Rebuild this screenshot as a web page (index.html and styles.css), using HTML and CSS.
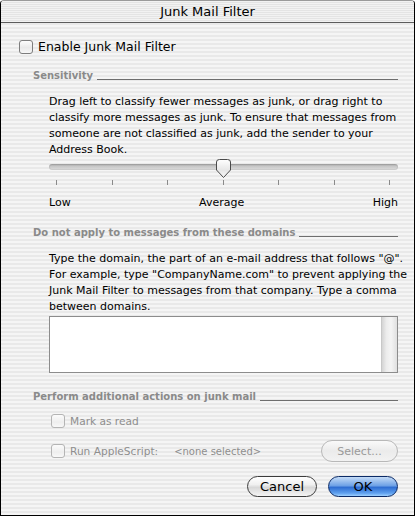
FILE: index.html
```html
<!DOCTYPE html>
<html>
<head>
<meta charset="utf-8">
<link rel="stylesheet" href="styles.css">
</head>
<body>
<div class="window">
  <div class="titlebar">Junk Mail Filter</div>
  <div class="content">
    <div class="check main-check"><span class="box"></span><span>Enable Junk Mail Filter</span></div>

    <div class="group-head head-sens"><span class="head-text">Sensitivity</span><span class="rule"></span></div>
    <p class="desc">Drag left to classify fewer messages as junk, or drag right to<br>classify more messages as junk. To ensure that messages from<br>someone are not classified as junk, add the sender to your<br>Address Book.</p>

    <div class="slider">
      <div class="track"></div>
      <svg class="thumb" width="17" height="21" viewBox="0 0 17 21">
        <defs>
          <linearGradient id="tg" x1="0" y1="0" x2="0" y2="1">
            <stop offset="0" stop-color="#ffffff"/>
            <stop offset="0.6" stop-color="#e6e6e6"/>
            <stop offset="1" stop-color="#f8f8f8"/>
          </linearGradient>
        </defs>
        <path d="M1.5,4 Q1.5,1.5 4.5,1.5 H12.5 Q15.5,1.5 15.5,4 V12 L8.5,19.5 L1.5,12 Z" fill="url(#tg)" stroke="#4a4a4a" stroke-width="1"/>
      </svg>
      <div class="ticks"><span></span><span></span><span></span><span></span><span></span><span></span><span></span></div>
    </div>
    <div class="scale-labels"><span>Low</span><span>Average</span><span>High</span></div>

    <div class="group-head head-domains"><span class="head-text">Do not apply to messages from these domains</span><span class="rule"></span></div>
    <p class="desc desc2">Type the domain, the part of an e-mail address that follows "@".<br>For example, type "CompanyName.com" to prevent applying the<br>Junk Mail Filter to messages from that company. Type a comma<br>between domains.</p>
    <div class="field"><div class="field-body"></div><div class="scroll"></div></div>

    <div class="group-head head-actions"><span class="head-text">Perform additional actions on junk mail</span><span class="rule"></span></div>
    <div class="check sub-check disabled mark-row"><span class="box"></span><span>Mark as read</span></div>
    <div class="script-row">
      <div class="check sub-check disabled"><span class="box"></span><span>Run AppleScript:</span></div>
      <span class="none-selected">&lt;none selected&gt;</span>
      <button class="btn btn-select">Select...</button>
    </div>
    <div class="buttons">
      <button class="btn btn-cancel">Cancel</button>
      <button class="btn btn-ok">OK</button>
    </div>
  </div>
</div>
</body>
</html>
```

FILE: styles.css
```css
html, body {
  margin: 0;
  padding: 0;
  background: #ffffff;
}
body {
  width: 415px;
  height: 516px;
  font-family: "DejaVu Sans", "Liberation Sans", sans-serif;
  color: #000;
}
.window {
  box-sizing: border-box;
  width: 415px;
  height: 516px;
  border-left: 1px solid #000;
  border-right: 1px solid #000;
  border-bottom: 1px solid #000;
  border-top: 1px solid #9a9a9a;
  border-radius: 4px 4px 0 0;
  overflow: hidden;
  background: repeating-linear-gradient(to bottom, #f5f5f5 0px, #f5f5f5 2px, #e9e9e9 2px, #e9e9e9 4px);
}
.titlebar {
  height: 21px;
  border-bottom: 1px solid #5c5c5c;
  text-align: center;
  font-size: 13px;
  line-height: 21px;
  background: repeating-linear-gradient(to bottom, #f2f2f2 0px, #f2f2f2 1px, #e4e4e4 1px, #e4e4e4 2px);
}
.content {
  padding: 0 16px 0 18px;
}
.check {
  display: flex;
  align-items: center;
  font-size: 12.5px;
  line-height: 16px;
}
.box {
  box-sizing: border-box;
  width: 14px;
  height: 14px;
  border: 1px solid #7d7d7d;
  border-radius: 3px;
  background: linear-gradient(to bottom, #fdfdfd 0%, #e9e9e9 55%, #f7f7f7 100%);
  margin-right: 5px;
  flex: none;
}
.main-check {
  margin-top: 16px;
}
.group-head {
  display: flex;
  align-items: center;
  margin-left: 14px;
  height: 14px;
}
.head-text {
  font-size: 10px;
  font-weight: bold;
  color: #8a8a8a;
  white-space: nowrap;
}
.rule {
  flex: 1;
  height: 1px;
  background: #6e6e6e;
  margin-left: 4px;
  margin-top: 8px;
}
.head-sens { margin-top: 13px; }
.desc {
  margin: 12px 0 0 30px;
  font-size: 11px;
  line-height: 16px;
  white-space: nowrap;
}
.slider {
  position: relative;
  margin-left: 30px;
  height: 28px;
}
.track {
  position: absolute;
  left: 0;
  right: 0;
  top: 6px;
  height: 6px;
  border-radius: 3px;
  background: linear-gradient(to bottom, #a4a4a4 0%, #c8c8c8 40%, #dcdcdc 100%);
  box-shadow: inset 0 0 0 1px rgba(0,0,0,0.06);
}
.thumb {
  position: absolute;
  left: 166px;
  top: 0px;
}
.ticks {
  position: absolute;
  left: 7px;
  right: 8px;
  top: 22px;
  display: flex;
  justify-content: space-between;
}
.ticks span {
  width: 1px;
  height: 5px;
  background: #8a8a8a;
}
.scale-labels {
  margin: 10px 0 0 30px;
  display: flex;
  justify-content: space-between;
  font-size: 11px;
  line-height: 14px;
}
.head-domains { margin-top: 15px; }
.desc2 { margin-top: 12px; }
.field {
  margin: 1px 0 0 30px;
  height: 57px;
  box-sizing: border-box;
  border: 1px solid #8c8c8c;
  background: #fff;
  display: flex;
}
.field-body { flex: 1; }
.scroll {
  width: 15px;
  background: linear-gradient(to right, #d4d4d4 0%, #ececec 30%, #f4f4f4 60%, #e0e0e0 100%);
  border-left: 1px solid #c8c8c8;
}
.head-actions { margin-top: 16px; }
.sub-check {
  margin-left: 32px;
  font-size: 10.6px;
}
.disabled {
  color: #8e8e8e;
}
.disabled .box {
  border-color: #b4b4b4;
  background: linear-gradient(to bottom, #fbfbfb 0%, #eeeeee 60%, #f8f8f8 100%);
}
.mark-row { margin-top: 10px; }
.script-row {
  display: flex;
  align-items: center;
  margin-top: 11px;
  height: 22px;
}
.none-selected {
  margin-left: 16px;
  font-size: 10px;
  color: #8e8e8e;
}
.btn {
  box-sizing: border-box;
  font-family: "DejaVu Sans", "Liberation Sans", sans-serif;
  border-radius: 11px;
  padding: 0;
  text-align: center;
}
.btn-select {
  margin-left: auto;
  width: 77px;
  height: 22px;
  font-size: 11px;
  color: #9a9a9a;
  border: 1px solid #b8b8b8;
  background: linear-gradient(to bottom, #fafafa 0%, #ebebeb 50%, #f2f2f2 100%);
}
.buttons {
  display: flex;
  justify-content: flex-end;
  gap: 11px;
  margin-top: 14px;
}
.btn-cancel, .btn-ok {
  width: 70px;
  height: 21px;
  font-size: 13px;
  line-height: 19px;
}
.btn-cancel {
  border: 1px solid #3c3c3c;
  background: linear-gradient(to bottom, #ffffff 0%, #f0f0f0 40%, #d8d8d8 55%, #f4f4f4 100%);
  color: #000;
}
.btn-ok {
  border: 1px solid #0b2a66;
  background: linear-gradient(to bottom, #c5dcf7 0%, #6fa2e6 45%, #2f6ed2 55%, #5fa0ee 85%, #9dd0ff 100%);
  color: #000;
}
```
